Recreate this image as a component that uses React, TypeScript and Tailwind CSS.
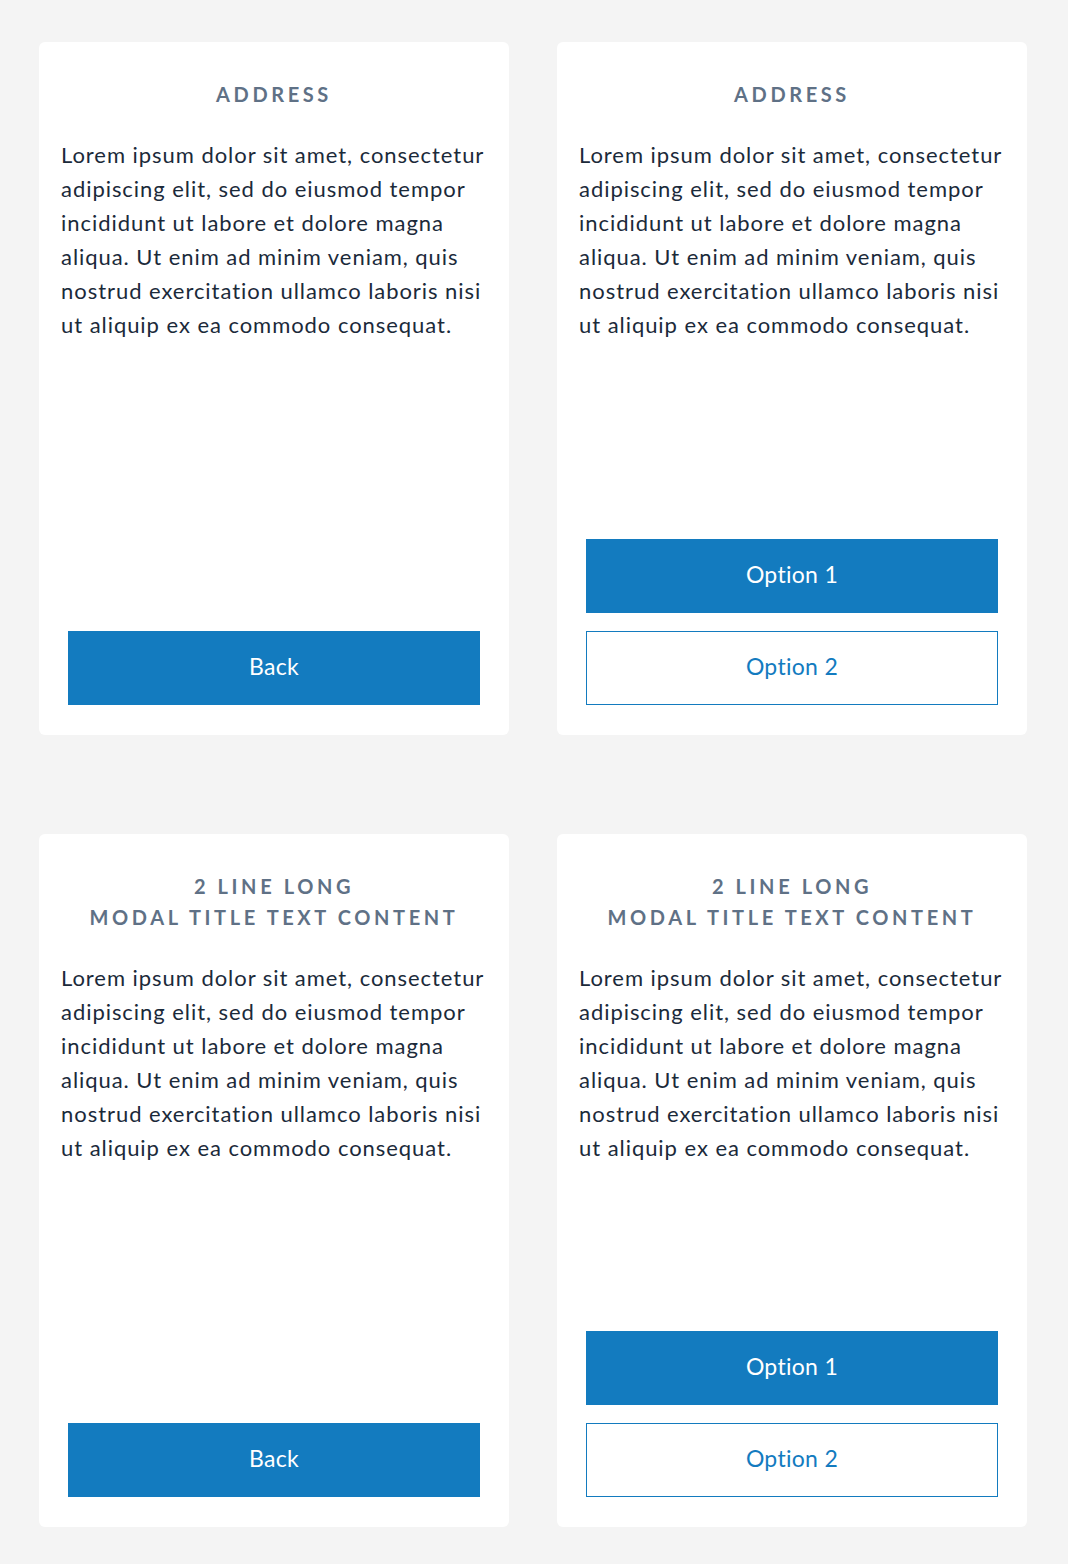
const body =
  "Lorem ipsum dolor sit amet, consectetur adipiscing elit, sed do eiusmod tempor incididunt ut labore et dolore magna aliqua. Ut enim ad minim veniam, quis nostrud exercitation ullamco laboris nisi ut aliquip ex ea commodo consequat."

type ModalProps = {
  title: string[]
  options?: boolean
}

const Modal = ({ title, options }: ModalProps) => {
  return (
    <div className="flex h-[693px] flex-col rounded-md bg-white pt-[37px] pb-[30px]">
      <h2 className="px-[18px] text-center text-[20px] font-bold uppercase leading-[31px] tracking-[3.6px] text-[#5f7186]">
        {title.map((line) => (
          <div key={line}>{line}</div>
        ))}
      </h2>
      <p className="mt-[28px] pl-[22px] pr-[18px] text-[22px] leading-[34px] tracking-[0.95px] text-[#1b2a3a]">
        {body}
      </p>
      <div className="mt-auto flex flex-col gap-[18px] pl-[29px] pr-[29px]">
        {options ? (
          <>
            <button className="h-[74px] w-full bg-[#137bbf] pb-[3px] text-[23px] tracking-[0.3px] text-white">
              Option 1
            </button>
            <button className="h-[74px] w-full border border-[#137bbf] bg-white pb-[3px] text-[23px] tracking-[0.3px] text-[#137bbf]">
              Option 2
            </button>
          </>
        ) : (
          <button className="h-[74px] w-full bg-[#137bbf] pb-[3px] text-[23px] tracking-[0.3px] text-white">Back</button>
        )}
      </div>
    </div>
  )
}

export default function App() {
  return (
    <div className="min-h-[1564px] bg-[#f4f4f4] pl-[39px] pr-[41px] pt-[42px] pb-[37px] font-['Lato',sans-serif]">
      <div className="grid grid-cols-2 gap-x-[48px] gap-y-[99px]">
        <Modal title={["Address"]} />
        <Modal title={["Address"]} options />
        <Modal title={["2 line long", "modal title text content"]} />
        <Modal title={["2 line long", "modal title text content"]} options />
      </div>
    </div>
  )
}
